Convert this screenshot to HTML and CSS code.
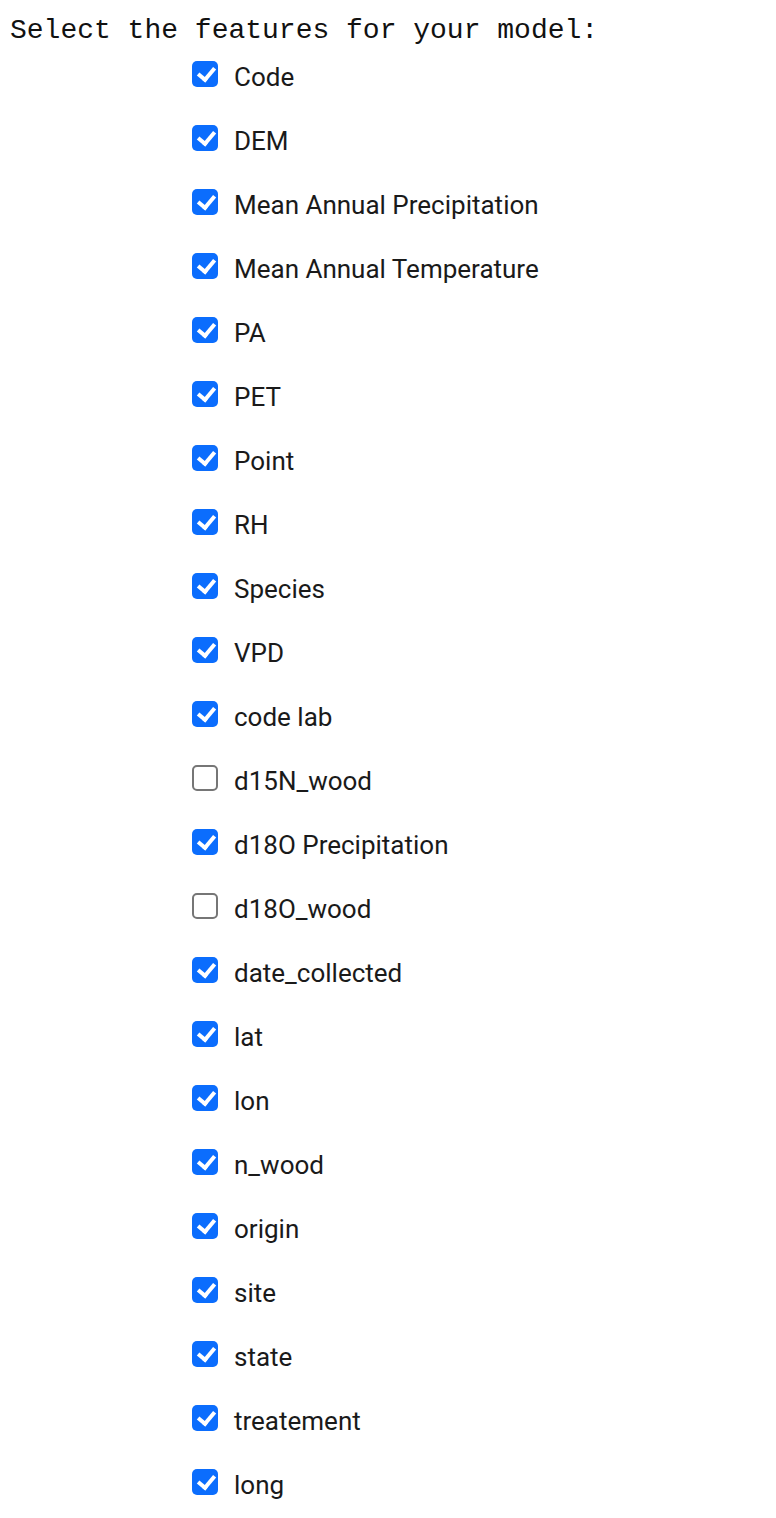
FILE: index.html
```html
<!DOCTYPE html>
<html>
<head>
<meta charset="utf-8">
<link rel="stylesheet" href="styles.css">
</head>
<body>
<div class="title">Select the features for your model:</div>
<div class="list">
  <label class="row"><span class="box on"></span><span class="txt">Code</span></label>
  <label class="row"><span class="box on"></span><span class="txt">DEM</span></label>
  <label class="row"><span class="box on"></span><span class="txt">Mean Annual Precipitation</span></label>
  <label class="row"><span class="box on"></span><span class="txt">Mean Annual Temperature</span></label>
  <label class="row"><span class="box on"></span><span class="txt">PA</span></label>
  <label class="row"><span class="box on"></span><span class="txt">PET</span></label>
  <label class="row"><span class="box on"></span><span class="txt">Point</span></label>
  <label class="row"><span class="box on"></span><span class="txt">RH</span></label>
  <label class="row"><span class="box on"></span><span class="txt">Species</span></label>
  <label class="row"><span class="box on"></span><span class="txt">VPD</span></label>
  <label class="row"><span class="box on"></span><span class="txt">code lab</span></label>
  <label class="row"><span class="box"></span><span class="txt">d15N_wood</span></label>
  <label class="row"><span class="box on"></span><span class="txt">d18O Precipitation</span></label>
  <label class="row"><span class="box"></span><span class="txt">d18O_wood</span></label>
  <label class="row"><span class="box on"></span><span class="txt">date_collected</span></label>
  <label class="row"><span class="box on"></span><span class="txt">lat</span></label>
  <label class="row"><span class="box on"></span><span class="txt">lon</span></label>
  <label class="row"><span class="box on"></span><span class="txt">n_wood</span></label>
  <label class="row"><span class="box on"></span><span class="txt">origin</span></label>
  <label class="row"><span class="box on"></span><span class="txt">site</span></label>
  <label class="row"><span class="box on"></span><span class="txt">state</span></label>
  <label class="row"><span class="box on"></span><span class="txt">treatement</span></label>
  <label class="row"><span class="box on"></span><span class="txt">long</span></label>
</div>
</body>
</html>
```
FILE: styles.css
```css
html, body {
  margin: 0;
  padding: 0;
  background: #ffffff;
}
body {
  padding: 8px 0 0 10px;
}
.title {
  font-family: "Liberation Mono", "Courier New", monospace;
  font-size: 28px;
  line-height: 40px;
  color: #111111;
  margin-top: 3px;
}
.list {
  padding-left: 182px;
  display: flex;
  flex-direction: column;
}
.row {
  display: flex;
  align-items: center;
  height: 64px;
  gap: 16px;
}
.row:first-child {
  margin-top: -6px;
}
.box {
  width: 26px;
  height: 26px;
  box-sizing: border-box;
  border-radius: 5px;
  border: 2px solid #767676;
  background: #ffffff;
  flex: none;
  position: relative;
  top: -3px;
}
.box.on {
  border: none;
  background: #0b6dfd;
}
.box.on::after {
  content: "";
  position: absolute;
  left: 9px;
  top: 3px;
  width: 7px;
  height: 13px;
  border-right: 4px solid #ffffff;
  border-bottom: 4px solid #ffffff;
  transform: rotate(40deg);
}
.txt {
  font-family: Roboto, "Liberation Sans", sans-serif;
  font-size: 26px;
  color: #1a1a1a;
  line-height: 28px;
}
```
